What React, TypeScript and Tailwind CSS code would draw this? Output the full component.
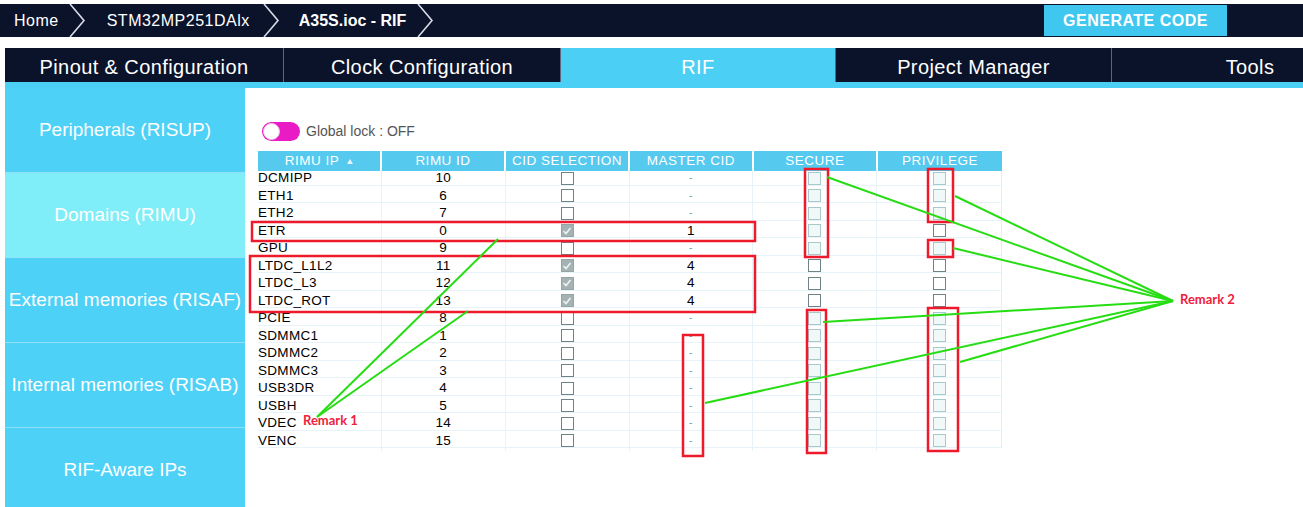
import React from "react";

type Row = { name: string; id: number; cid: boolean; master: string };

const rows: Row[] = [
  { name: "DCMIPP", id: 10, cid: false, master: "-" },
  { name: "ETH1", id: 6, cid: false, master: "-" },
  { name: "ETH2", id: 7, cid: false, master: "-" },
  { name: "ETR", id: 0, cid: true, master: "1" },
  { name: "GPU", id: 9, cid: false, master: "-" },
  { name: "LTDC_L1L2", id: 11, cid: true, master: "4" },
  { name: "LTDC_L3", id: 12, cid: true, master: "4" },
  { name: "LTDC_ROT", id: 13, cid: true, master: "4" },
  { name: "PCIE", id: 8, cid: false, master: "-" },
  { name: "SDMMC1", id: 1, cid: false, master: "-" },
  { name: "SDMMC2", id: 2, cid: false, master: "-" },
  { name: "SDMMC3", id: 3, cid: false, master: "-" },
  { name: "USB3DR", id: 4, cid: false, master: "-" },
  { name: "USBH", id: 5, cid: false, master: "-" },
  { name: "VDEC", id: 14, cid: false, master: "-" },
  { name: "VENC", id: 15, cid: false, master: "-" },
];

const tabs = [
  { label: "Pinout & Configuration", w: "w-[278px]" },
  { label: "Clock Configuration", w: "w-[277px]" },
  { label: "RIF", w: "w-[275px]" },
  { label: "Project Manager", w: "w-[276px]" },
  { label: "Tools", w: "w-[277px]" },
];
const sideItems = [
  "Peripherals (RISUP)",
  "Domains (RIMU)",
  "External memories (RISAF)",
  "Internal memories (RISAB)",
  "RIF-Aware IPs",
];
const headers = ["RIMU IP", "RIMU ID", "CID SELECTION", "MASTER CID", "SECURE", "PRIVILEGE"];

function Chevron() {
  return (
    <svg width="17" height="33" viewBox="0 0 17 33" className="shrink-0">
      <polyline points="1,0 15,16.5 1,33" fill="none" stroke="#d8dce6" strokeWidth="1.6" />
    </svg>
  );
}

function Box({ checked, faded }: { checked?: boolean; faded?: boolean }) {
  if (checked) {
    return (
      <div className="w-[13px] h-[13px] bg-[#a4b2b4] border border-[#95a4a6] flex items-center justify-center">
        <svg width="10" height="10" viewBox="0 0 10 10">
          <polyline points="1.5,5 4,7.5 8.5,2" fill="none" stroke="#eef3f3" strokeWidth="1.6" />
        </svg>
      </div>
    );
  }
  return (
    <div
      className={
        faded
          ? "w-[13px] h-[13px] border border-[#a8c9cc] bg-[#f1f8f8]"
          : "w-[13px] h-[13px] border border-[#6f8284] bg-white"
      }
    />
  );
}

export default function App() {
  return (
    <div className="relative w-[1303px] h-[507px] overflow-hidden bg-white font-['Liberation_Sans',Arial,sans-serif]">
      {/* breadcrumb bar */}
      <div className="mt-1 h-[33px] bg-[#0b132b] flex items-center text-white text-[16px] tracking-[0.5px]">
        <span className="ml-[14px]">Home</span>
        <div className="ml-[10px]">
          <Chevron />
        </div>
        <span className="ml-[21px]">STM32MP251DAlx</span>
        <div className="ml-[13px]">
          <Chevron />
        </div>
        <span className="ml-[19px] font-bold tracking-normal">A35S.ioc - RIF</span>
        <div className="ml-[11px]">
          <Chevron />
        </div>
        <div className="ml-auto mr-[76px] self-stretch my-[1px] w-[183px] bg-[#3fc7f0] flex items-center justify-center font-bold text-[16px] tracking-[0.5px]">
          GENERATE CODE
        </div>
      </div>

      {/* tabs */}
      <div className="mt-[11px] ml-[5px] h-[34px] bg-[#0b132b] flex overflow-hidden">
        {tabs.map((t, i) => (
          <div
            key={t.label}
            className={
              "shrink-0 flex items-center justify-center pt-[3px] text-white text-[20px] tracking-[0.4px] " +
              t.w +
              (i > 0 ? " border-l border-[#5a6582]" : "") +
              (t.label === "RIF" ? " bg-[#4ccff5]" : "")
            }
          >
            {t.label}
          </div>
        ))}
      </div>
      <div className="ml-[5px] h-[6px] bg-[#4ccff5]" />

      {/* main area */}
      <div className="ml-[5px] flex">
        <div className="w-[240px] flex flex-col">
          {sideItems.map((s, i) => (
            <div
              key={s}
              className={
                "h-[85px] flex items-center justify-center text-white text-[19px] whitespace-nowrap border-b border-[#8fe0f8] " +
                (i === 1 ? "bg-[#7feef8]" : "bg-[#4dd1f7]")
              }
            >
              {s}
            </div>
          ))}
        </div>

        <div className="flex-1 pl-[13px] pt-[34px]">
          <div className="flex items-center gap-[6px] ml-[4px] h-[19px]">
            <div className="w-[38px] h-[19px] rounded-full bg-[#e81bc4] flex items-center pl-[1px]">
              <div className="w-[17px] h-[17px] rounded-full bg-white border border-[#f0c0e8]" />
            </div>
            <span className="text-[14px] text-[#555]">Global lock : OFF</span>
          </div>

          <div className="mt-[10px] w-[744px]">
            <div className="grid grid-cols-6 h-[17px]">
              {headers.map((h, i) => (
                <div
                  key={h}
                  className={
                    "bg-[#56c9ef] text-white text-[13.5px] tracking-[0.5px] flex items-center justify-center gap-[8px] " +
                    (i < 5 ? "mr-[2px]" : "")
                  }
                >
                  {h}
                  {i === 0 && (
                    <svg width="6" height="5" viewBox="0 0 6 5">
                      <polygon points="3,0 6,5 0,5" fill="#e6f6fc" />
                    </svg>
                  )}
                </div>
              ))}
            </div>
            <div className="border-r border-[#dcf1f8]">
              {rows.map((r, i) => {
                const secFaded = i <= 4 || i >= 8;
                const privFaded = i <= 2 || i === 4 || i >= 8;
                return (
                  <div
                    key={r.name}
                    className="grid grid-cols-6 h-[17.5px] border-b border-[#e6f4f9] text-[13.5px] text-black tracking-[0.3px]"
                  >
                    <div className="flex items-center border-r border-[#e6f4f9]">{r.name}</div>
                    <div className="flex items-center justify-center border-r border-[#e6f4f9]">{r.id}</div>
                    <div className="flex items-center justify-center border-r border-[#e6f4f9]">
                      <Box checked={r.cid} />
                    </div>
                    <div className="flex items-center justify-center border-r border-[#e6f4f9]">
                      {r.master === "-" ? (
                        <span className="text-[10px] text-[#5f9fae] leading-none">-</span>
                      ) : (
                        r.master
                      )}
                    </div>
                    <div className="flex items-center justify-center border-r border-[#e6f4f9]">
                      <Box faded={secFaded} />
                    </div>
                    <div className="flex items-center justify-center">
                      <Box faded={privFaded} />
                    </div>
                  </div>
                );
              })}
            </div>
          </div>
        </div>
      </div>

      {/* annotation overlay */}
      <svg
        className="absolute left-0 top-0 pointer-events-none"
        width="1303"
        height="507"
        viewBox="0 0 1303 507"
      >
        <g fill="none" stroke="#ee1a2c" strokeWidth="2.5">
          <rect x="252" y="222" width="503" height="19" />
          <rect x="250" y="256" width="505" height="56" />
          <rect x="805" y="169" width="23" height="88" />
          <rect x="928" y="169" width="25" height="53" />
          <rect x="928" y="240" width="25" height="17" />
          <rect x="807" y="310" width="19" height="143" />
          <rect x="928" y="308" width="30" height="143" />
          <rect x="683" y="335" width="20" height="121" />
        </g>
        <g stroke="#25dd12" strokeWidth="2" fill="none">
          <line x1="317" y1="417" x2="498" y2="239" />
          <line x1="317" y1="417" x2="468" y2="311" />
          <line x1="1173" y1="301" x2="827" y2="177" />
          <line x1="1173" y1="301" x2="955" y2="196" />
          <line x1="1173" y1="301" x2="953" y2="248" />
          <line x1="1173" y1="301" x2="823" y2="322" />
          <line x1="1173" y1="301" x2="960" y2="362" />
          <line x1="1173" y1="301" x2="705" y2="403" />
        </g>
      </svg>
      <span className="absolute left-[303px] top-[414px] text-[13px] font-bold text-[#f0203c] font-['Lato',sans-serif] leading-none">
        Remark 1
      </span>
      <span className="absolute left-[1180px] top-[293px] text-[13px] font-bold text-[#f0203c] font-['Lato',sans-serif] leading-none">
        Remark 2
      </span>
    </div>
  );
}
